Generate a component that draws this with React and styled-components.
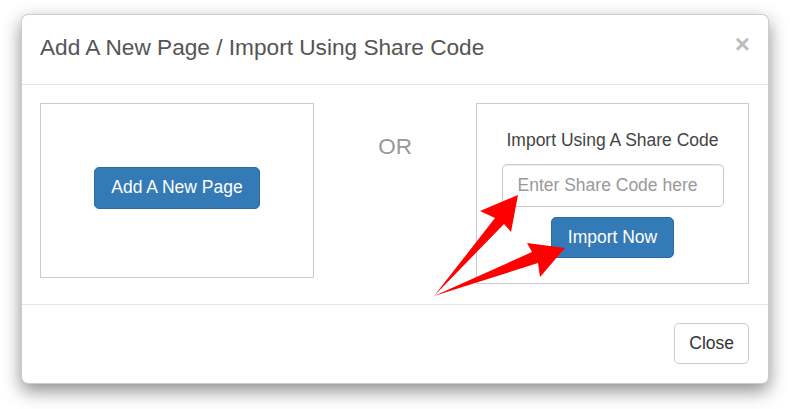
import React from "react";
import styled, { createGlobalStyle } from "styled-components";

const Global = createGlobalStyle`
  html, body { margin: 0; padding: 0; background: #fff; }
  body { font-family: "Liberation Sans", Arial, sans-serif; }
  * { box-sizing: border-box; }
`;

const Page = styled.div`
  width: 790px;
  height: 409px;
  padding: 14px 21px 0 21px;
  background: #fff;
`;

const Modal = styled.div`
  position: relative;
  width: 748px;
  height: 370px;
  background: #fff;
  border: 1px solid rgba(0, 0, 0, 0.2);
  border-radius: 7px;
  box-shadow: 0 7px 18px rgba(0, 0, 0, 0.45);
  display: flex;
  flex-direction: column;
`;

const Header = styled.div`
  height: 70px;
  border-bottom: 1px solid #e5e5e5;
  display: flex;
  align-items: center;
  justify-content: space-between;
  padding: 0 19px 0 18px;
`;

const Title = styled.h4`
  margin: 0;
  font-size: 22.65px;
  font-weight: 400;
  color: #555;
  margin-top: -4px;
`;

const CloseX = styled.button`
  border: 0;
  background: none;
  padding: 0;
  font-family: "Liberation Sans", Arial, sans-serif;
  font-size: 26px;
  font-weight: 700;
  color: #bdbdbd;
  line-height: 1;
  margin-top: -12px;
  margin-right: -1px;
`;

const Body = styled.div`
  flex: 1;
  display: flex;
  align-items: flex-start;
  padding: 18px 19px 20px 18px;
`;

const Panel = styled.div`
  width: ${(p) => p.$w}px;
  height: ${(p) => p.$h}px;
  border: 1px solid #ccc;
  display: flex;
  flex-direction: column;
  align-items: center;
  justify-content: ${(p) => p.$justify || "center"};
  padding-top: ${(p) => p.$pt || 0}px;
  padding-bottom: ${(p) => p.$pb || 0}px;
`;

const OrCol = styled.div`
  flex: 1;
  display: flex;
  justify-content: center;
  padding-top: 31px;
  font-size: 22.5px;
  color: #999;
`;

const Label = styled.div`
  font-size: 17.5px;
  color: #444;
  line-height: 20px;
  margin-bottom: 14px;
`;

const Input = styled.input`
  width: 222px;
  height: 43px;
  border: 1px solid #ccc;
  border-radius: 5px;
  padding: 0 15px;
  font-family: "Liberation Sans", Arial, sans-serif;
  font-size: 17.5px;
  color: #555;
  box-shadow: inset 0 1px 1px rgba(0, 0, 0, 0.075);
  outline: none;
  &::placeholder { color: #999; }
`;

const Btn = styled.button`
  height: ${(p) => p.$h || 42}px;
  padding: 0 ${(p) => p.$px || 16}px;
  border-radius: 5px;
  font-family: "Liberation Sans", Arial, sans-serif;
  font-size: 17.5px;
  line-height: 1;
  cursor: pointer;
  background: ${(p) => (p.$primary ? "#337ab7" : "#fff")};
  color: ${(p) => (p.$primary ? "#fff" : "#333")};
  border: 1px solid ${(p) => (p.$primary ? "#2e6da4" : "#ccc")};
  margin-top: ${(p) => p.$mt || 0}px;
`;

const Footer = styled.div`
  height: 79px;
  border-top: 1px solid #e5e5e5;
  display: flex;
  justify-content: flex-end;
  align-items: flex-start;
  padding: 18px 19px 0 0;
`;

const Arrows = styled.svg`
  position: absolute;
  left: -22px;
  top: -15px;
  width: 790px;
  height: 409px;
  pointer-events: none;
`;

export default function App() {
  return (
    <>
      <Global />
      <Page>
        <Modal>
          <Header>
            <Title>Add A New Page / Import Using Share Code</Title>
            <CloseX>×</CloseX>
          </Header>
          <Body>
            <Panel $w={274} $h={175} $pb={5}>
              <Btn $primary $h={42} $px={16}>Add A New Page</Btn>
            </Panel>
            <OrCol>OR</OrCol>
            <Panel $w={273} $h={181} $justify="flex-start" $pt={26}>
              <Label>Import Using A Share Code</Label>
              <Input placeholder="Enter Share Code here" />
              <Btn $primary $h={41} $px={16} $mt={10}>Import Now</Btn>
            </Panel>
          </Body>
          <Footer>
            <Btn $h={41} $px={14}>Close</Btn>
          </Footer>
          <Arrows viewBox="0 0 790 409">
            <polygon
              fill="#ff0000"
              points="434,296 495,218 480,211 518,195 511,232 504,224"
            />
            <polygon
              fill="#ff0000"
              points="434,296 532,252 527,243 565,248 540,277 538,263"
            />
          </Arrows>
        </Modal>
      </Page>
    </>
  );
}
